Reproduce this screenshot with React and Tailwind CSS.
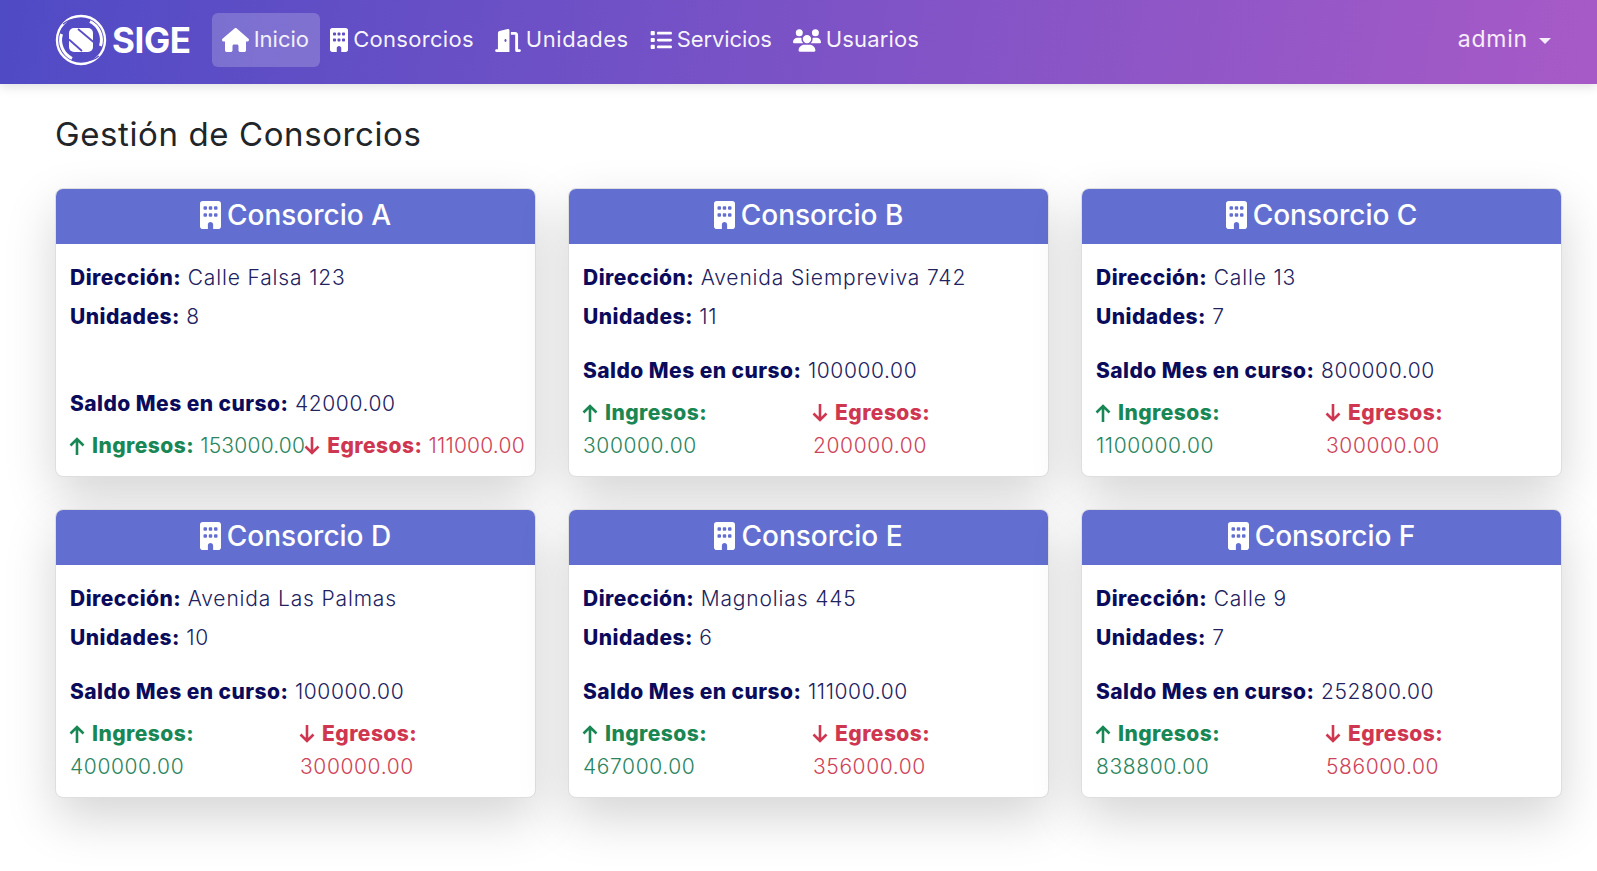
import { FaHouse, FaBuilding, FaDoorOpen, FaList, FaUsers } from 'react-icons/fa6'

const consorcios = [
  { nombre: 'Consorcio A', direccion: 'Calle Falsa 123', unidades: 8, saldo: '42000.00', ingresos: '153000.00', egresos: '111000.00', inline: true },
  { nombre: 'Consorcio B', direccion: 'Avenida Siempreviva 742', unidades: 11, saldo: '100000.00', ingresos: '300000.00', egresos: '200000.00' },
  { nombre: 'Consorcio C', direccion: 'Calle 13', unidades: 7, saldo: '800000.00', ingresos: '1100000.00', egresos: '300000.00' },
  { nombre: 'Consorcio D', direccion: 'Avenida Las Palmas', unidades: 10, saldo: '100000.00', ingresos: '400000.00', egresos: '300000.00' },
  { nombre: 'Consorcio E', direccion: 'Magnolias 445', unidades: 6, saldo: '111000.00', ingresos: '467000.00', egresos: '356000.00' },
  { nombre: 'Consorcio F', direccion: 'Calle 9', unidades: 7, saldo: '252800.00', ingresos: '838800.00', egresos: '586000.00' },
]

const links = [
  { label: 'Consorcios', icon: FaBuilding, size: 'w-[18px] h-[24px]', track: 'tracking-[0.3px]' },
  { label: 'Unidades', icon: FaDoorOpen, size: 'w-[26px] h-[23px]', track: 'tracking-[0.55px]' },
  { label: 'Servicios', icon: FaList, size: 'w-[22px] h-[22px]', track: 'tracking-[-0.1px]' },
  { label: 'Usuarios', icon: FaUsers, size: 'w-[28px] h-[23px]', track: 'tracking-[0.15px]' },
]

function Logo() {
  return (
    <svg viewBox="0 0 52 52" className="w-[52px] h-[52px] shrink-0" fill="none">
      <circle cx="26" cy="26" r="24" stroke="white" strokeWidth="2.4" />
      <path d="M35 7.500A20.500 20.500 0 0 1 45.500 32" stroke="white" strokeWidth="3" />
      <path d="M17 44.500A20.500 20.500 0 0 1 6.500 20" stroke="white" strokeWidth="3" />
      <path d="M8 10A24 24 0 0 1 24 5" stroke="#5a4cc4" strokeWidth="1.2" />
      <path d="M44 42A24 24 0 0 1 28 47" stroke="#5a4cc4" strokeWidth="1.2" />
      <rect x="14" y="14" width="24" height="24" rx="5" fill="white" />
      <path d="M23 15L38.500 28" stroke="#5a4cc4" strokeWidth="1.8" />
      <path d="M14 25.500L27 37" stroke="#5a4cc4" strokeWidth="1.8" />
    </svg>
  )
}

function Navbar() {
  return (
    <nav className="h-[84px] flex items-center pl-[55px] pr-[46px] pb-[4px] bg-[linear-gradient(100deg,#4f4bc5_0%,#a75ac7_100%)] shadow-[0_3px_10px_rgba(0,0,0,0.12)] text-white">
      <div className="flex items-center gap-[5px] mr-[21px]">
        <Logo />
        <span className="text-[35px] font-bold tracking-[-0.4px] leading-none">SIGE</span>
      </div>
      <a className="h-[54px] w-[108px] rounded-md bg-white/20 flex items-center gap-[5px] px-[10px] text-[22px]">
        <FaHouse className="w-[27px] h-[24px] shrink-0" />
        <span className="mb-[2px] text-white/90">Inicio</span>
      </a>
      {links.map((l) => (
        <a key={l.label} className={'flex items-center gap-[5px] px-[10.5px] text-[22px] ' + l.track}>
          <l.icon className={l.size + ' shrink-0'} />
          <span className="mb-[2px] text-white/95">{l.label}</span>
        </a>
      ))}
      <div className="ml-auto flex items-center text-[23px] tracking-[0.8px] text-white/90">
        <span className="mb-[2px]">admin</span>
        <span className="ml-[11px] mt-[1px] w-0 h-0 border-x-[6px] border-x-transparent border-t-[6px] border-t-white/90" />
      </div>
    </nav>
  )
}

function Arrow({ up }) {
  return (
    <svg viewBox="0 0 16 18" className="inline-block w-[16px] h-[18px] -ml-[1px] mr-[7px] align-[-2px]" fill="none" stroke="currentColor" strokeWidth="2.6">
      {up ? <path d="M8 18V2M1.500 8.500L8 2l6.500 6.500" /> : <path d="M8 0V16M1.500 9.500L8 16l6.500-6.500" />}
    </svg>
  )
}

function Amount({ up, stacked, label, value }) {
  const valueColor = up ? 'text-[#2a8560]' : 'text-[#cf4359]'
  return (
    <div className={up ? 'text-[#198754]' : 'text-[#cf3650]'}>
      <Arrow up={up} />
      <b className="font-extrabold tracking-[0.45px]">{label}</b>
      {stacked ? (
        <div className={'mt-[3.5px] font-light ' + valueColor}>{value}</div>
      ) : (
        <span className={'font-light tracking-[0.2px] ' + valueColor}> {value}</span>
      )}
    </div>
  )
}

function Label({ children }) {
  return <b className="font-extrabold tracking-[0.45px] text-[#0b0b5c]">{children}</b>
}

function Card({ c }) {
  return (
    <div className="rounded-lg border border-[#dedede] bg-white shadow-[0_20px_50px_rgba(0,0,0,0.17)] flex flex-col overflow-hidden">
      <div className="h-[55px] shrink-0 pb-[3px] bg-[#636fd0] text-white flex items-center justify-center gap-[6px] text-[28px] font-medium">
        <FaBuilding className="w-[21px] h-[28px]" />
        {c.nombre}
      </div>
      <div className="flex-1 flex flex-col px-[14px] pt-[18.5px] pb-[15px] text-[21px] tracking-[0.6px] leading-[30px] text-[#22225f] font-light">
        <p className="mb-[9px]"><Label>Dirección:</Label> <span className="tracking-[0.85px]">{c.direccion}</span></p>
        <p className="mb-2"><Label>Unidades:</Label> {c.unidades}</p>
        <div className="mt-auto">
          <p className="mb-[12px]"><Label>Saldo Mes en curso:</Label> {c.saldo}</p>
          {c.inline ? (
            <div className="flex whitespace-nowrap">
              <Amount up label="Ingresos:" value={c.ingresos} />
              <Amount label="Egresos:" value={c.egresos} />
            </div>
          ) : (
            <div className="grid grid-cols-[230px_1fr]">
              <Amount up stacked label="Ingresos:" value={c.ingresos} />
              <Amount stacked label="Egresos:" value={c.egresos} />
            </div>
          )}
        </div>
      </div>
    </div>
  )
}

export default function App() {
  return (
    <div className="min-h-[871px] bg-white font-['Inter','Liberation_Sans',sans-serif] overflow-hidden">
      <Navbar />
      <main className="pl-[55px] pr-[35px] pt-[28px]">
        <h1 className="text-[33px] tracking-[0.6px] leading-[44px] font-normal text-[#212529] mb-[32px]">Gestión de Consorcios</h1>
        <div className="grid grid-cols-3 gap-[32px] auto-rows-[289px]">
          {consorcios.map((c) => <Card key={c.nombre} c={c} />)}
        </div>
      </main>
    </div>
  )
}
